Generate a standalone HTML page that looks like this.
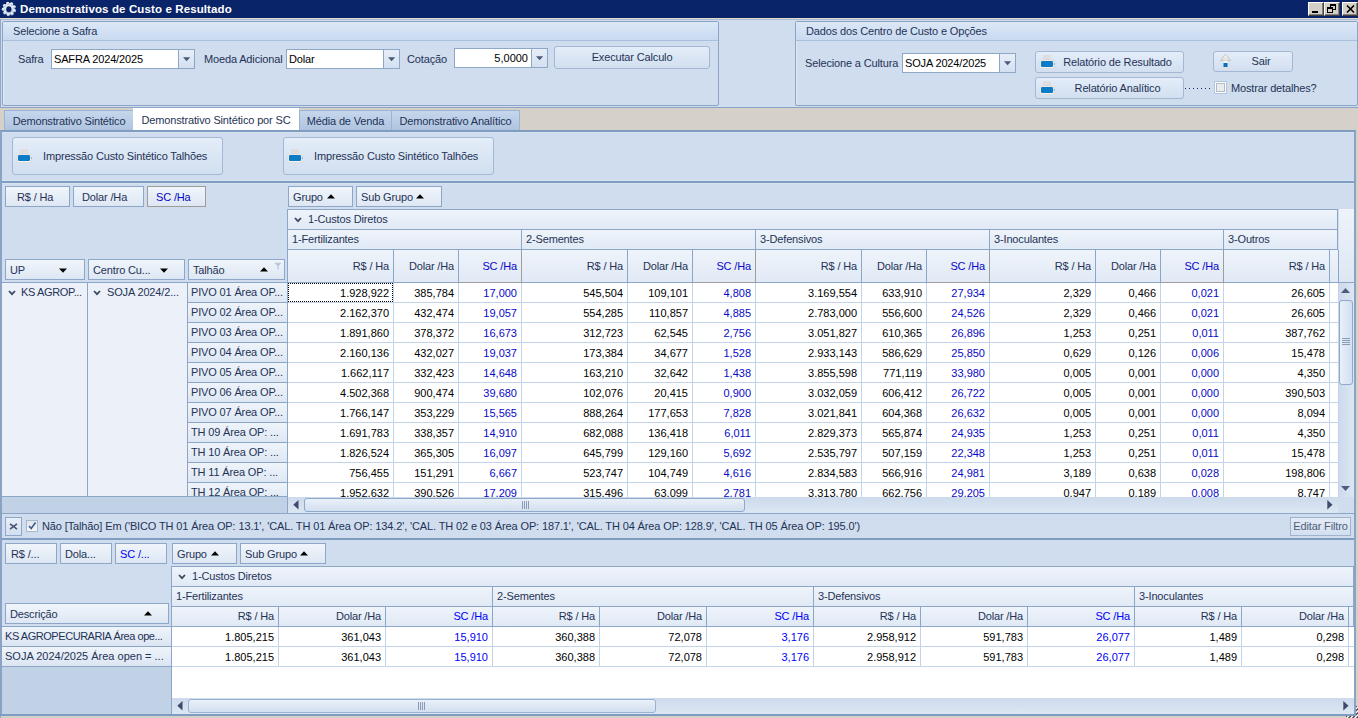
<!DOCTYPE html><html><head><meta charset="utf-8"><style>
html,body{margin:0;padding:0;}
body{width:1358px;height:718px;position:relative;overflow:hidden;background:#d5d1c9;font-family:"Liberation Sans",sans-serif;font-size:11px;color:#1f3356;}
.t{position:absolute;white-space:nowrap;letter-spacing:-0.15px;}
.n{position:absolute;white-space:nowrap;text-align:right;color:#000;}
</style></head><body>
<div style="position:absolute;left:0px;top:0px;width:1358px;height:18px;background:#0a246a;"></div>
<svg style="position:absolute;left:1px;top:1px" width="16" height="16" viewBox="0 0 16 16">
<defs><linearGradient id="gg" x1="0" y1="0" x2="0.3" y2="1"><stop offset="0" stop-color="#ffffff"/><stop offset="0.55" stop-color="#dfe6ef"/><stop offset="1" stop-color="#9fb8d8"/></linearGradient></defs>
<g fill="url(#gg)"><circle cx="8" cy="8" r="5.7"/><circle cx="13.35" cy="9.65" r="1.7"/><circle cx="11.03" cy="12.71" r="1.7"/><circle cx="7.30" cy="13.56" r="1.7"/><circle cx="3.89" cy="11.81" r="1.7"/><circle cx="2.41" cy="8.27" r="1.7"/><circle cx="3.54" cy="4.62" r="1.7"/><circle cx="6.76" cy="2.54" r="1.7"/><circle cx="10.56" cy="3.02" r="1.7"/><circle cx="13.16" cy="5.83" r="1.7"/></g><ellipse cx="7.8" cy="8.2" rx="2.6" ry="3" fill="#0a246a"/></svg>
<div class="t" style="left:20px;top:2px;font-weight:bold;font-size:11.5px;letter-spacing:0.12px;color:#fff;line-height:14px;">Demonstrativos de Custo e Resultado</div>
<div style="position:absolute;left:1308px;top:2px;width:16px;height:14px;box-sizing:border-box;background:#d4d0c8;border-top:1px solid #fff;border-left:1px solid #fff;border-right:1px solid #404040;border-bottom:1px solid #404040;box-shadow:inset -1px -1px 0 #808080;"><div style="position:absolute;left:3px;top:8px;width:6px;height:2px;background:#000"></div></div>
<div style="position:absolute;left:1324px;top:2px;width:16px;height:14px;box-sizing:border-box;background:#d4d0c8;border-top:1px solid #fff;border-left:1px solid #fff;border-right:1px solid #404040;border-bottom:1px solid #404040;box-shadow:inset -1px -1px 0 #808080;"><div style="position:absolute;left:5px;top:1px;width:5px;height:5px;border:1px solid #000;border-top-width:2px;box-sizing:border-box;width:6px;height:6px;"></div><div style="position:absolute;left:2px;top:4px;width:6px;height:6px;border:1px solid #000;border-top-width:2px;box-sizing:border-box;background:#d4d0c8"></div></div>
<div style="position:absolute;left:1342px;top:2px;width:16px;height:14px;box-sizing:border-box;background:#d4d0c8;border-top:1px solid #fff;border-left:1px solid #fff;border-right:1px solid #404040;border-bottom:1px solid #404040;box-shadow:inset -1px -1px 0 #808080;"><svg style="position:absolute;left:3px;top:2px" width="9" height="8" viewBox="0 0 9 8"><path d="M1 0.5 L8 7.5 M8 0.5 L1 7.5" stroke="#000" stroke-width="1.6"/></svg></div>
<div style="position:absolute;left:0px;top:18px;width:1358px;height:90px;background:#d0ddee;"></div>
<div style="position:absolute;left:0px;top:18px;width:1358px;height:1px;background:#e6dcc9;"></div>
<div style="position:absolute;left:0px;top:19px;width:1358px;height:1px;background:#a9bcd6;"></div>
<div style="position:absolute;left:0px;top:107px;width:1358px;height:1px;background:#8ba3c5;"></div>
<div style="position:absolute;left:0px;top:19px;width:1px;height:700px;background:#91a7c6;"></div>
<div style="position:absolute;left:2px;top:21px;width:717px;height:85px;box-sizing:border-box;border:1px solid #8ba3c5;border-radius:2px;background:#d0ddee;box-shadow:inset 1px 1px 0 #e2ebf7;"></div>
<div style="position:absolute;left:3px;top:22px;width:715px;height:19px;box-sizing:border-box;background:linear-gradient(#dbe7f7,#c9daf0);border-bottom:1px solid #a9bfdc;"></div>
<div class="t" style="left:13px;top:25px;line-height:13px;">Selecione a Safra</div>
<div style="position:absolute;left:795px;top:21px;width:563px;height:85px;box-sizing:border-box;border:1px solid #8ba3c5;border-radius:2px;background:#d0ddee;box-shadow:inset 1px 1px 0 #e2ebf7;"></div>
<div style="position:absolute;left:796px;top:22px;width:561px;height:19px;box-sizing:border-box;background:linear-gradient(#dbe7f7,#c9daf0);border-bottom:1px solid #a9bfdc;"></div>
<div class="t" style="left:806px;top:25px;line-height:13px;">Dados dos Centro de Custo e Opções</div>
<div class="t" style="left:18px;top:52px;line-height:14px;">Safra</div>
<div style="position:absolute;left:51px;top:49px;width:144px;height:20px;box-sizing:border-box;border:1px solid #8fa7c7;background:#fff;"></div>
<div class="t" style="left:54px;top:49px;height:20px;line-height:20px;color:#000;">SAFRA 2024/2025</div>
<div style="position:absolute;left:178px;top:49px;width:17px;height:20px;box-sizing:border-box;border:1px solid #8fa7c7;background:linear-gradient(#e7eef8,#d3e0f1);"></div>
<svg style="position:absolute;left:183px;top:57px" width="8" height="5" viewBox="0 0 8 5"><path d="M0 0.3 L7.2 0.3 L3.6 4.3 Z" fill="#4a5a7a"/></svg>
<div class="t" style="left:204px;top:52px;line-height:14px;">Moeda Adicional</div>
<div style="position:absolute;left:286px;top:49px;width:114px;height:20px;box-sizing:border-box;border:1px solid #8fa7c7;background:#fff;"></div>
<div class="t" style="left:289px;top:49px;height:20px;line-height:20px;color:#000;">Dolar</div>
<div style="position:absolute;left:383px;top:49px;width:17px;height:20px;box-sizing:border-box;border:1px solid #8fa7c7;background:linear-gradient(#e7eef8,#d3e0f1);"></div>
<svg style="position:absolute;left:388px;top:57px" width="8" height="5" viewBox="0 0 8 5"><path d="M0 0.3 L7.2 0.3 L3.6 4.3 Z" fill="#4a5a7a"/></svg>
<div class="t" style="left:407px;top:52px;line-height:14px;">Cotação</div>
<div style="position:absolute;left:454px;top:48px;width:94px;height:20px;box-sizing:border-box;border:1px solid #8fa7c7;background:#fff;"></div>
<div class="n" style="left:454px;width:74px;top:48px;height:20px;line-height:20px;">5,0000</div>
<div style="position:absolute;left:531px;top:48px;width:17px;height:20px;box-sizing:border-box;border:1px solid #8fa7c7;background:linear-gradient(#e7eef8,#d3e0f1);"></div>
<svg style="position:absolute;left:536px;top:56px" width="8" height="5" viewBox="0 0 8 5"><path d="M0 0.3 L7.2 0.3 L3.6 4.3 Z" fill="#4a5a7a"/></svg>
<div style="position:absolute;left:554px;top:46px;width:156px;height:23px;box-sizing:border-box;border:1px solid #a4b8d4;border-radius:3px;background:linear-gradient(#e4edf9,#d2dff0);"></div>
<div class="t" style="left:554px;top:46px;width:156px;height:23px;line-height:23px;text-align:center;">Executar Calculo</div>
<div class="t" style="left:805px;top:56px;line-height:14px;">Selecione a Cultura</div>
<div style="position:absolute;left:902px;top:53px;width:114px;height:20px;box-sizing:border-box;border:1px solid #8fa7c7;background:#fff;"></div>
<div class="t" style="left:905px;top:53px;height:20px;line-height:20px;color:#000;">SOJA 2024/2025</div>
<div style="position:absolute;left:999px;top:53px;width:17px;height:20px;box-sizing:border-box;border:1px solid #8fa7c7;background:linear-gradient(#e7eef8,#d3e0f1);"></div>
<svg style="position:absolute;left:1004px;top:61px" width="8" height="5" viewBox="0 0 8 5"><path d="M0 0.3 L7.2 0.3 L3.6 4.3 Z" fill="#4a5a7a"/></svg>
<div style="position:absolute;left:1035px;top:51px;width:149px;height:22px;box-sizing:border-box;border:1px solid #a4b8d4;border-radius:3px;background:linear-gradient(#e4edf9,#d2dff0);"></div>
<div class="t" style="left:1043px;top:51px;width:149px;height:22px;line-height:22px;text-align:center;">Relatório de Resultado</div>
<svg style="position:absolute;left:1039px;top:54px" width="16" height="15" viewBox="0 0 16 15">
<rect x="4" y="1" width="8" height="5.5" fill="#dedede"/>
<rect x="1" y="6" width="14" height="8.6" rx="1" fill="#f9f3ec" stroke="#d6d6d6" stroke-width="0.8"/>
<rect x="2" y="7" width="12" height="6" rx="1.2" fill="#0a7cc8"/>
<rect x="14.8" y="9.5" width="1" height="1" fill="#3a8fd0"/></svg>
<div style="position:absolute;left:1213px;top:51px;width:80px;height:21px;box-sizing:border-box;border:1px solid #a4b8d4;border-radius:3px;background:linear-gradient(#e4edf9,#d2dff0);"></div>
<div class="t" style="left:1221px;top:51px;width:80px;height:21px;line-height:21px;text-align:center;">Sair</div>
<svg style="position:absolute;left:1220px;top:53px" width="12" height="17" viewBox="0 0 12 17">
<defs><linearGradient id="ag" x1="0" y1="0" x2="0" y2="1"><stop offset="0" stop-color="#fafafa"/><stop offset="1" stop-color="#dcdcdc"/></linearGradient></defs><path d="M5.5 1 L10.8 7.5 L0.6 7.5 Z" fill="url(#ag)" stroke="#bdbdbd" stroke-width="0.8"/>
<rect x="3.5" y="7.5" width="4" height="2.5" fill="#f6f2ee"/>
<rect x="3.5" y="10" width="4" height="4" fill="#0a6fc0"/>
<rect x="3.5" y="14" width="4" height="2.7" fill="#e4e0dc"/></svg>
<div style="position:absolute;left:1035px;top:77px;width:149px;height:22px;box-sizing:border-box;border:1px solid #a4b8d4;border-radius:3px;background:linear-gradient(#e4edf9,#d2dff0);"></div>
<div class="t" style="left:1043px;top:77px;width:149px;height:22px;line-height:22px;text-align:center;">Relatório Analítico</div>
<svg style="position:absolute;left:1039px;top:80px" width="16" height="15" viewBox="0 0 16 15">
<rect x="4" y="1" width="8" height="5.5" fill="#dedede"/>
<rect x="1" y="6" width="14" height="8.6" rx="1" fill="#f9f3ec" stroke="#d6d6d6" stroke-width="0.8"/>
<rect x="2" y="7" width="12" height="6" rx="1.2" fill="#0a7cc8"/>
<rect x="14.8" y="9.5" width="1" height="1" fill="#3a8fd0"/></svg>
<div style="position:absolute;left:1185px;top:88px;width:26px;height:1px;background:repeating-linear-gradient(90deg,#1d2a6a 0 1px,transparent 1px 4px);"></div>
<div style="position:absolute;left:1214px;top:81px;width:13px;height:13px;box-sizing:border-box;border:1px solid #b2c5df;background:#fbfcfd;"></div>
<div style="position:absolute;left:1216px;top:83px;width:9px;height:9px;box-sizing:border-box;border:1px solid #b5bcc6;background:#e9ebef;"></div>
<div class="t" style="left:1231px;top:81px;line-height:14px;">Mostrar detalhes?</div>
<div style="position:absolute;left:0px;top:108px;width:1358px;height:23px;background:#d5d1c9;"></div>
<div style="position:absolute;left:4px;top:110px;width:130px;height:21px;box-sizing:border-box;border:1px solid #9db3d3;border-bottom:none;background:linear-gradient(#c6d7ed,#aec3df);"></div>
<div class="t" style="left:4px;top:111px;width:130px;height:20px;line-height:20px;text-align:center;">Demonstrativo Sintético</div>
<div style="position:absolute;left:133px;top:108px;width:166px;height:23px;background:#fff;"></div>
<div class="t" style="left:133px;top:110px;width:166px;height:21px;line-height:21px;text-align:center;">Demonstrativo Sintético por SC</div>
<div style="position:absolute;left:299px;top:110px;width:93px;height:21px;box-sizing:border-box;border:1px solid #9db3d3;border-bottom:none;background:linear-gradient(#c6d7ed,#aec3df);"></div>
<div class="t" style="left:299px;top:111px;width:93px;height:20px;line-height:20px;text-align:center;">Média de Venda</div>
<div style="position:absolute;left:391px;top:110px;width:129px;height:21px;box-sizing:border-box;border:1px solid #9db3d3;border-bottom:none;background:linear-gradient(#c6d7ed,#aec3df);"></div>
<div class="t" style="left:391px;top:111px;width:129px;height:20px;line-height:20px;text-align:center;">Demonstrativo Analítico</div>
<div style="position:absolute;left:0px;top:131px;width:1356px;height:585px;background:#d0ddee;"></div>
<div style="position:absolute;left:0px;top:130px;width:1356px;height:2px;background:#7f9cc1;"></div>
<div style="position:absolute;left:2px;top:132px;width:1352px;height:1px;background:#d7e2f0;"></div>
<div style="position:absolute;left:0px;top:131px;width:2px;height:585px;background:#8aa3c4;"></div>
<div style="position:absolute;left:1354px;top:131px;width:2px;height:585px;background:#8aa3c4;"></div>
<div style="position:absolute;left:0px;top:714px;width:1356px;height:2px;background:#7f9cc1;"></div>
<div style="position:absolute;left:12px;top:137px;width:211px;height:38px;box-sizing:border-box;border:1px solid #a4b8d4;border-radius:3px;background:linear-gradient(#e4edf9,#d2dff0);"></div>
<div class="t" style="left:43px;top:137px;height:38px;line-height:38px;">Impressão Custo Sintético Talhões</div>
<svg style="position:absolute;left:16px;top:148px" width="16" height="15" viewBox="0 0 16 15">
<rect x="4" y="1" width="8" height="5.5" fill="#dedede"/>
<rect x="1" y="6" width="14" height="8.6" rx="1" fill="#f9f3ec" stroke="#d6d6d6" stroke-width="0.8"/>
<rect x="2" y="7" width="12" height="6" rx="1.2" fill="#0a7cc8"/>
<rect x="14.8" y="9.5" width="1" height="1" fill="#3a8fd0"/></svg>
<div style="position:absolute;left:283px;top:137px;width:211px;height:38px;box-sizing:border-box;border:1px solid #a4b8d4;border-radius:3px;background:linear-gradient(#e4edf9,#d2dff0);"></div>
<div class="t" style="left:314px;top:137px;height:38px;line-height:38px;">Impressão Custo Sintético Talhões</div>
<svg style="position:absolute;left:287px;top:148px" width="16" height="15" viewBox="0 0 16 15">
<rect x="4" y="1" width="8" height="5.5" fill="#dedede"/>
<rect x="1" y="6" width="14" height="8.6" rx="1" fill="#f9f3ec" stroke="#d6d6d6" stroke-width="0.8"/>
<rect x="2" y="7" width="12" height="6" rx="1.2" fill="#0a7cc8"/>
<rect x="14.8" y="9.5" width="1" height="1" fill="#3a8fd0"/></svg>
<div style="position:absolute;left:2px;top:181px;width:1352px;height:2px;background:#7f9cc1;"></div>
<div style="position:absolute;left:2px;top:180px;width:1352px;height:1px;background:#d8e3f0;"></div>
<div style="position:absolute;left:2px;top:183px;width:1352px;height:1px;background:#d8e3f0;"></div>
<div style="position:absolute;left:5px;top:186px;width:65px;height:21px;box-sizing:border-box;border:1px solid #8ea7c8;background:linear-gradient(#f0f5fb,#dde7f3);"></div>
<div class="t" style="left:17px;top:187px;height:21px;line-height:21px;">R$ / Ha</div>
<div style="position:absolute;left:73px;top:186px;width:71px;height:21px;box-sizing:border-box;border:1px solid #8ea7c8;background:linear-gradient(#f0f5fb,#dde7f3);"></div>
<div class="t" style="left:82px;top:187px;height:21px;line-height:21px;">Dolar /Ha</div>
<div style="position:absolute;left:147px;top:186px;width:59px;height:21px;box-sizing:border-box;border:1px solid #a09c98;background:linear-gradient(#f0f5fb,#dde7f3);"></div>
<div class="t" style="left:156px;top:187px;height:21px;line-height:21px;color:#0808c8;">SC /Ha</div>
<div style="position:absolute;left:288px;top:186px;width:65px;height:21px;box-sizing:border-box;border:1px solid #8ea7c8;background:linear-gradient(#f0f5fb,#dde7f3);"></div>
<div class="t" style="left:293px;top:187px;height:21px;line-height:21px;">Grupo</div>
<svg style="position:absolute;left:327px;top:194px" width="8" height="5" viewBox="0 0 8 5"><path d="M0 4.5 L8 4.5 L4 0.3 Z" fill="#000"/></svg>
<div style="position:absolute;left:356px;top:186px;width:86px;height:21px;box-sizing:border-box;border:1px solid #8ea7c8;background:linear-gradient(#f0f5fb,#dde7f3);"></div>
<div class="t" style="left:361px;top:187px;height:21px;line-height:21px;">Sub Grupo</div>
<svg style="position:absolute;left:416px;top:194px" width="8" height="5" viewBox="0 0 8 5"><path d="M0 4.5 L8 4.5 L4 0.3 Z" fill="#000"/></svg>
<div style="position:absolute;left:5px;top:259px;width:80px;height:21px;box-sizing:border-box;border:1px solid #8ea7c8;background:linear-gradient(#f0f5fb,#dde7f3);"></div>
<div class="t" style="left:10px;top:260px;height:21px;line-height:21px;">UP</div>
<svg style="position:absolute;left:59px;top:268px" width="8" height="5" viewBox="0 0 8 5"><path d="M0 0.5 L8 0.5 L4 4.7 Z" fill="#000"/></svg>
<div style="position:absolute;left:88px;top:259px;width:97px;height:21px;box-sizing:border-box;border:1px solid #8ea7c8;background:linear-gradient(#f0f5fb,#dde7f3);"></div>
<div class="t" style="left:93px;top:260px;height:21px;line-height:21px;">Centro Cu...</div>
<svg style="position:absolute;left:160px;top:268px" width="8" height="5" viewBox="0 0 8 5"><path d="M0 0.5 L8 0.5 L4 4.7 Z" fill="#000"/></svg>
<div style="position:absolute;left:188px;top:259px;width:97px;height:21px;box-sizing:border-box;border:1px solid #8ea7c8;background:linear-gradient(#f0f5fb,#dde7f3);"></div>
<div class="t" style="left:193px;top:260px;height:21px;line-height:21px;">Talhão</div>
<svg style="position:absolute;left:260px;top:267px" width="8" height="5" viewBox="0 0 8 5"><path d="M0 4.5 L8 4.5 L4 0.3 Z" fill="#000"/></svg>
<svg style="position:absolute;left:274px;top:262px" width="8" height="8" viewBox="0 0 8 8"><path d="M0.5 0.8 L7.5 0.8 L4.6 4 L4.6 7.5 L3.4 7.5 L3.4 4 Z" fill="#b7c6d8"/></svg>
<div style="position:absolute;left:287px;top:209px;width:1051px;height:1px;background:#8ca6c8;"></div>
<div style="position:absolute;left:287px;top:209px;width:1px;height:288px;background:#8ca6c8;"></div>
<div style="position:absolute;left:288px;top:210px;width:1050px;height:20px;box-sizing:border-box;border-right:1px solid #8ca6c8;border-bottom:1px solid #8ca6c8;background:linear-gradient(#eff4fb,#e0e9f5);"></div>
<div class="t" style="left:308px;top:209px;height:20px;line-height:20px;">1-Custos Diretos</div>
<svg style="position:absolute;left:294px;top:217px" width="8" height="6" viewBox="0 0 8 6"><path d="M1 1 L4 4.2 L7 1" fill="none" stroke="#3b4a63" stroke-width="1.8"/></svg>
<div style="position:absolute;left:288px;top:230px;width:234px;height:20px;box-sizing:border-box;border-right:1px solid #8ca6c8;border-bottom:1px solid #8ca6c8;background:linear-gradient(#eff4fb,#e0e9f5);"></div>
<div class="t" style="left:292px;top:229px;height:20px;line-height:20px;">1-Fertilizantes</div>
<div style="position:absolute;left:522px;top:230px;width:234px;height:20px;box-sizing:border-box;border-right:1px solid #8ca6c8;border-bottom:1px solid #8ca6c8;background:linear-gradient(#eff4fb,#e0e9f5);"></div>
<div class="t" style="left:526px;top:229px;height:20px;line-height:20px;">2-Sementes</div>
<div style="position:absolute;left:756px;top:230px;width:234px;height:20px;box-sizing:border-box;border-right:1px solid #8ca6c8;border-bottom:1px solid #8ca6c8;background:linear-gradient(#eff4fb,#e0e9f5);"></div>
<div class="t" style="left:760px;top:229px;height:20px;line-height:20px;">3-Defensivos</div>
<div style="position:absolute;left:990px;top:230px;width:234px;height:20px;box-sizing:border-box;border-right:1px solid #8ca6c8;border-bottom:1px solid #8ca6c8;background:linear-gradient(#eff4fb,#e0e9f5);"></div>
<div class="t" style="left:994px;top:229px;height:20px;line-height:20px;">3-Inoculantes</div>
<div style="position:absolute;left:1224px;top:230px;width:114px;height:20px;box-sizing:border-box;border-right:1px solid #8ca6c8;border-bottom:1px solid #8ca6c8;background:linear-gradient(#eff4fb,#e0e9f5);"></div>
<div class="t" style="left:1228px;top:229px;height:20px;line-height:20px;">3-Outros</div>
<div style="position:absolute;left:288px;top:250px;width:106px;height:33px;box-sizing:border-box;border-right:1px solid #8ca6c8;border-bottom:1px solid #8ca6c8;background:linear-gradient(#eff4fb,#e0e9f5);"></div>
<div class="t" style="left:288px;width:101px;top:250px;height:33px;line-height:33px;text-align:right;">R$ / Ha</div>
<div style="position:absolute;left:394px;top:250px;width:65px;height:33px;box-sizing:border-box;border-right:1px solid #8ca6c8;border-bottom:1px solid #8ca6c8;background:linear-gradient(#eff4fb,#e0e9f5);"></div>
<div class="t" style="left:394px;width:60px;top:250px;height:33px;line-height:33px;text-align:right;">Dolar /Ha</div>
<div style="position:absolute;left:459px;top:250px;width:63px;height:33px;box-sizing:border-box;border-right:1px solid #a09e9a;border-bottom:1px solid #a09e9a;background:linear-gradient(#eff4fb,#e0e9f5);"></div>
<div class="t" style="left:459px;width:58px;top:250px;height:33px;line-height:33px;text-align:right;color:#0808c8;">SC /Ha</div>
<div style="position:absolute;left:522px;top:250px;width:106px;height:33px;box-sizing:border-box;border-right:1px solid #8ca6c8;border-bottom:1px solid #8ca6c8;background:linear-gradient(#eff4fb,#e0e9f5);"></div>
<div class="t" style="left:522px;width:101px;top:250px;height:33px;line-height:33px;text-align:right;">R$ / Ha</div>
<div style="position:absolute;left:628px;top:250px;width:65px;height:33px;box-sizing:border-box;border-right:1px solid #8ca6c8;border-bottom:1px solid #8ca6c8;background:linear-gradient(#eff4fb,#e0e9f5);"></div>
<div class="t" style="left:628px;width:60px;top:250px;height:33px;line-height:33px;text-align:right;">Dolar /Ha</div>
<div style="position:absolute;left:693px;top:250px;width:63px;height:33px;box-sizing:border-box;border-right:1px solid #a09e9a;border-bottom:1px solid #a09e9a;background:linear-gradient(#eff4fb,#e0e9f5);"></div>
<div class="t" style="left:693px;width:58px;top:250px;height:33px;line-height:33px;text-align:right;color:#0808c8;">SC /Ha</div>
<div style="position:absolute;left:756px;top:250px;width:106px;height:33px;box-sizing:border-box;border-right:1px solid #8ca6c8;border-bottom:1px solid #8ca6c8;background:linear-gradient(#eff4fb,#e0e9f5);"></div>
<div class="t" style="left:756px;width:101px;top:250px;height:33px;line-height:33px;text-align:right;">R$ / Ha</div>
<div style="position:absolute;left:862px;top:250px;width:65px;height:33px;box-sizing:border-box;border-right:1px solid #8ca6c8;border-bottom:1px solid #8ca6c8;background:linear-gradient(#eff4fb,#e0e9f5);"></div>
<div class="t" style="left:862px;width:60px;top:250px;height:33px;line-height:33px;text-align:right;">Dolar /Ha</div>
<div style="position:absolute;left:927px;top:250px;width:63px;height:33px;box-sizing:border-box;border-right:1px solid #a09e9a;border-bottom:1px solid #a09e9a;background:linear-gradient(#eff4fb,#e0e9f5);"></div>
<div class="t" style="left:927px;width:58px;top:250px;height:33px;line-height:33px;text-align:right;color:#0808c8;">SC /Ha</div>
<div style="position:absolute;left:990px;top:250px;width:106px;height:33px;box-sizing:border-box;border-right:1px solid #8ca6c8;border-bottom:1px solid #8ca6c8;background:linear-gradient(#eff4fb,#e0e9f5);"></div>
<div class="t" style="left:990px;width:101px;top:250px;height:33px;line-height:33px;text-align:right;">R$ / Ha</div>
<div style="position:absolute;left:1096px;top:250px;width:65px;height:33px;box-sizing:border-box;border-right:1px solid #8ca6c8;border-bottom:1px solid #8ca6c8;background:linear-gradient(#eff4fb,#e0e9f5);"></div>
<div class="t" style="left:1096px;width:60px;top:250px;height:33px;line-height:33px;text-align:right;">Dolar /Ha</div>
<div style="position:absolute;left:1161px;top:250px;width:63px;height:33px;box-sizing:border-box;border-right:1px solid #a09e9a;border-bottom:1px solid #a09e9a;background:linear-gradient(#eff4fb,#e0e9f5);"></div>
<div class="t" style="left:1161px;width:58px;top:250px;height:33px;line-height:33px;text-align:right;color:#0808c8;">SC /Ha</div>
<div style="position:absolute;left:1224px;top:250px;width:106px;height:33px;box-sizing:border-box;border-right:1px solid #8ca6c8;border-bottom:1px solid #8ca6c8;background:linear-gradient(#eff4fb,#e0e9f5);"></div>
<div class="t" style="left:1224px;width:101px;top:250px;height:33px;line-height:33px;text-align:right;">R$ / Ha</div>
<div style="position:absolute;left:1330px;top:250px;width:9px;height:33px;box-sizing:border-box;border-right:1px solid #8ca6c8;border-bottom:1px solid #8ca6c8;background:linear-gradient(#eff4fb,#e0e9f5);"></div>
<div style="position:absolute;left:1339px;top:209px;width:15px;height:73px;background:linear-gradient(#eef3fa,#dde7f3);"></div>
<div style="position:absolute;left:1339px;top:282px;width:15px;height:1px;background:#8ca6c8;"></div>
<div style="position:absolute;left:288px;top:283px;width:1050px;height:214px;background:#fff;"></div>
<div class="n" style="left:288px;top:284px;width:101px;height:19px;line-height:19px;color:#000;">1.928,922</div>
<div class="n" style="left:394px;top:284px;width:60px;height:19px;line-height:19px;color:#000;">385,784</div>
<div class="n" style="left:459px;top:284px;width:58px;height:19px;line-height:19px;color:#0808c8;">17,000</div>
<div class="n" style="left:522px;top:284px;width:101px;height:19px;line-height:19px;color:#000;">545,504</div>
<div class="n" style="left:628px;top:284px;width:60px;height:19px;line-height:19px;color:#000;">109,101</div>
<div class="n" style="left:693px;top:284px;width:58px;height:19px;line-height:19px;color:#0808c8;">4,808</div>
<div class="n" style="left:756px;top:284px;width:101px;height:19px;line-height:19px;color:#000;">3.169,554</div>
<div class="n" style="left:862px;top:284px;width:60px;height:19px;line-height:19px;color:#000;">633,910</div>
<div class="n" style="left:927px;top:284px;width:58px;height:19px;line-height:19px;color:#0808c8;">27,934</div>
<div class="n" style="left:990px;top:284px;width:101px;height:19px;line-height:19px;color:#000;">2,329</div>
<div class="n" style="left:1096px;top:284px;width:60px;height:19px;line-height:19px;color:#000;">0,466</div>
<div class="n" style="left:1161px;top:284px;width:58px;height:19px;line-height:19px;color:#0808c8;">0,021</div>
<div class="n" style="left:1224px;top:284px;width:101px;height:19px;line-height:19px;color:#000;">26,605</div>
<div style="position:absolute;left:288px;top:302px;width:1050px;height:1px;background:#c3d3ea;"></div>
<div class="n" style="left:288px;top:304px;width:101px;height:19px;line-height:19px;color:#000;">2.162,370</div>
<div class="n" style="left:394px;top:304px;width:60px;height:19px;line-height:19px;color:#000;">432,474</div>
<div class="n" style="left:459px;top:304px;width:58px;height:19px;line-height:19px;color:#0808c8;">19,057</div>
<div class="n" style="left:522px;top:304px;width:101px;height:19px;line-height:19px;color:#000;">554,285</div>
<div class="n" style="left:628px;top:304px;width:60px;height:19px;line-height:19px;color:#000;">110,857</div>
<div class="n" style="left:693px;top:304px;width:58px;height:19px;line-height:19px;color:#0808c8;">4,885</div>
<div class="n" style="left:756px;top:304px;width:101px;height:19px;line-height:19px;color:#000;">2.783,000</div>
<div class="n" style="left:862px;top:304px;width:60px;height:19px;line-height:19px;color:#000;">556,600</div>
<div class="n" style="left:927px;top:304px;width:58px;height:19px;line-height:19px;color:#0808c8;">24,526</div>
<div class="n" style="left:990px;top:304px;width:101px;height:19px;line-height:19px;color:#000;">2,329</div>
<div class="n" style="left:1096px;top:304px;width:60px;height:19px;line-height:19px;color:#000;">0,466</div>
<div class="n" style="left:1161px;top:304px;width:58px;height:19px;line-height:19px;color:#0808c8;">0,021</div>
<div class="n" style="left:1224px;top:304px;width:101px;height:19px;line-height:19px;color:#000;">26,605</div>
<div style="position:absolute;left:288px;top:322px;width:1050px;height:1px;background:#c3d3ea;"></div>
<div class="n" style="left:288px;top:324px;width:101px;height:19px;line-height:19px;color:#000;">1.891,860</div>
<div class="n" style="left:394px;top:324px;width:60px;height:19px;line-height:19px;color:#000;">378,372</div>
<div class="n" style="left:459px;top:324px;width:58px;height:19px;line-height:19px;color:#0808c8;">16,673</div>
<div class="n" style="left:522px;top:324px;width:101px;height:19px;line-height:19px;color:#000;">312,723</div>
<div class="n" style="left:628px;top:324px;width:60px;height:19px;line-height:19px;color:#000;">62,545</div>
<div class="n" style="left:693px;top:324px;width:58px;height:19px;line-height:19px;color:#0808c8;">2,756</div>
<div class="n" style="left:756px;top:324px;width:101px;height:19px;line-height:19px;color:#000;">3.051,827</div>
<div class="n" style="left:862px;top:324px;width:60px;height:19px;line-height:19px;color:#000;">610,365</div>
<div class="n" style="left:927px;top:324px;width:58px;height:19px;line-height:19px;color:#0808c8;">26,896</div>
<div class="n" style="left:990px;top:324px;width:101px;height:19px;line-height:19px;color:#000;">1,253</div>
<div class="n" style="left:1096px;top:324px;width:60px;height:19px;line-height:19px;color:#000;">0,251</div>
<div class="n" style="left:1161px;top:324px;width:58px;height:19px;line-height:19px;color:#0808c8;">0,011</div>
<div class="n" style="left:1224px;top:324px;width:101px;height:19px;line-height:19px;color:#000;">387,762</div>
<div style="position:absolute;left:288px;top:342px;width:1050px;height:1px;background:#c3d3ea;"></div>
<div class="n" style="left:288px;top:344px;width:101px;height:19px;line-height:19px;color:#000;">2.160,136</div>
<div class="n" style="left:394px;top:344px;width:60px;height:19px;line-height:19px;color:#000;">432,027</div>
<div class="n" style="left:459px;top:344px;width:58px;height:19px;line-height:19px;color:#0808c8;">19,037</div>
<div class="n" style="left:522px;top:344px;width:101px;height:19px;line-height:19px;color:#000;">173,384</div>
<div class="n" style="left:628px;top:344px;width:60px;height:19px;line-height:19px;color:#000;">34,677</div>
<div class="n" style="left:693px;top:344px;width:58px;height:19px;line-height:19px;color:#0808c8;">1,528</div>
<div class="n" style="left:756px;top:344px;width:101px;height:19px;line-height:19px;color:#000;">2.933,143</div>
<div class="n" style="left:862px;top:344px;width:60px;height:19px;line-height:19px;color:#000;">586,629</div>
<div class="n" style="left:927px;top:344px;width:58px;height:19px;line-height:19px;color:#0808c8;">25,850</div>
<div class="n" style="left:990px;top:344px;width:101px;height:19px;line-height:19px;color:#000;">0,629</div>
<div class="n" style="left:1096px;top:344px;width:60px;height:19px;line-height:19px;color:#000;">0,126</div>
<div class="n" style="left:1161px;top:344px;width:58px;height:19px;line-height:19px;color:#0808c8;">0,006</div>
<div class="n" style="left:1224px;top:344px;width:101px;height:19px;line-height:19px;color:#000;">15,478</div>
<div style="position:absolute;left:288px;top:362px;width:1050px;height:1px;background:#c3d3ea;"></div>
<div class="n" style="left:288px;top:364px;width:101px;height:19px;line-height:19px;color:#000;">1.662,117</div>
<div class="n" style="left:394px;top:364px;width:60px;height:19px;line-height:19px;color:#000;">332,423</div>
<div class="n" style="left:459px;top:364px;width:58px;height:19px;line-height:19px;color:#0808c8;">14,648</div>
<div class="n" style="left:522px;top:364px;width:101px;height:19px;line-height:19px;color:#000;">163,210</div>
<div class="n" style="left:628px;top:364px;width:60px;height:19px;line-height:19px;color:#000;">32,642</div>
<div class="n" style="left:693px;top:364px;width:58px;height:19px;line-height:19px;color:#0808c8;">1,438</div>
<div class="n" style="left:756px;top:364px;width:101px;height:19px;line-height:19px;color:#000;">3.855,598</div>
<div class="n" style="left:862px;top:364px;width:60px;height:19px;line-height:19px;color:#000;">771,119</div>
<div class="n" style="left:927px;top:364px;width:58px;height:19px;line-height:19px;color:#0808c8;">33,980</div>
<div class="n" style="left:990px;top:364px;width:101px;height:19px;line-height:19px;color:#000;">0,005</div>
<div class="n" style="left:1096px;top:364px;width:60px;height:19px;line-height:19px;color:#000;">0,001</div>
<div class="n" style="left:1161px;top:364px;width:58px;height:19px;line-height:19px;color:#0808c8;">0,000</div>
<div class="n" style="left:1224px;top:364px;width:101px;height:19px;line-height:19px;color:#000;">4,350</div>
<div style="position:absolute;left:288px;top:382px;width:1050px;height:1px;background:#c3d3ea;"></div>
<div class="n" style="left:288px;top:384px;width:101px;height:19px;line-height:19px;color:#000;">4.502,368</div>
<div class="n" style="left:394px;top:384px;width:60px;height:19px;line-height:19px;color:#000;">900,474</div>
<div class="n" style="left:459px;top:384px;width:58px;height:19px;line-height:19px;color:#0808c8;">39,680</div>
<div class="n" style="left:522px;top:384px;width:101px;height:19px;line-height:19px;color:#000;">102,076</div>
<div class="n" style="left:628px;top:384px;width:60px;height:19px;line-height:19px;color:#000;">20,415</div>
<div class="n" style="left:693px;top:384px;width:58px;height:19px;line-height:19px;color:#0808c8;">0,900</div>
<div class="n" style="left:756px;top:384px;width:101px;height:19px;line-height:19px;color:#000;">3.032,059</div>
<div class="n" style="left:862px;top:384px;width:60px;height:19px;line-height:19px;color:#000;">606,412</div>
<div class="n" style="left:927px;top:384px;width:58px;height:19px;line-height:19px;color:#0808c8;">26,722</div>
<div class="n" style="left:990px;top:384px;width:101px;height:19px;line-height:19px;color:#000;">0,005</div>
<div class="n" style="left:1096px;top:384px;width:60px;height:19px;line-height:19px;color:#000;">0,001</div>
<div class="n" style="left:1161px;top:384px;width:58px;height:19px;line-height:19px;color:#0808c8;">0,000</div>
<div class="n" style="left:1224px;top:384px;width:101px;height:19px;line-height:19px;color:#000;">390,503</div>
<div style="position:absolute;left:288px;top:402px;width:1050px;height:1px;background:#c3d3ea;"></div>
<div class="n" style="left:288px;top:404px;width:101px;height:19px;line-height:19px;color:#000;">1.766,147</div>
<div class="n" style="left:394px;top:404px;width:60px;height:19px;line-height:19px;color:#000;">353,229</div>
<div class="n" style="left:459px;top:404px;width:58px;height:19px;line-height:19px;color:#0808c8;">15,565</div>
<div class="n" style="left:522px;top:404px;width:101px;height:19px;line-height:19px;color:#000;">888,264</div>
<div class="n" style="left:628px;top:404px;width:60px;height:19px;line-height:19px;color:#000;">177,653</div>
<div class="n" style="left:693px;top:404px;width:58px;height:19px;line-height:19px;color:#0808c8;">7,828</div>
<div class="n" style="left:756px;top:404px;width:101px;height:19px;line-height:19px;color:#000;">3.021,841</div>
<div class="n" style="left:862px;top:404px;width:60px;height:19px;line-height:19px;color:#000;">604,368</div>
<div class="n" style="left:927px;top:404px;width:58px;height:19px;line-height:19px;color:#0808c8;">26,632</div>
<div class="n" style="left:990px;top:404px;width:101px;height:19px;line-height:19px;color:#000;">0,005</div>
<div class="n" style="left:1096px;top:404px;width:60px;height:19px;line-height:19px;color:#000;">0,001</div>
<div class="n" style="left:1161px;top:404px;width:58px;height:19px;line-height:19px;color:#0808c8;">0,000</div>
<div class="n" style="left:1224px;top:404px;width:101px;height:19px;line-height:19px;color:#000;">8,094</div>
<div style="position:absolute;left:288px;top:422px;width:1050px;height:1px;background:#c3d3ea;"></div>
<div class="n" style="left:288px;top:424px;width:101px;height:19px;line-height:19px;color:#000;">1.691,783</div>
<div class="n" style="left:394px;top:424px;width:60px;height:19px;line-height:19px;color:#000;">338,357</div>
<div class="n" style="left:459px;top:424px;width:58px;height:19px;line-height:19px;color:#0808c8;">14,910</div>
<div class="n" style="left:522px;top:424px;width:101px;height:19px;line-height:19px;color:#000;">682,088</div>
<div class="n" style="left:628px;top:424px;width:60px;height:19px;line-height:19px;color:#000;">136,418</div>
<div class="n" style="left:693px;top:424px;width:58px;height:19px;line-height:19px;color:#0808c8;">6,011</div>
<div class="n" style="left:756px;top:424px;width:101px;height:19px;line-height:19px;color:#000;">2.829,373</div>
<div class="n" style="left:862px;top:424px;width:60px;height:19px;line-height:19px;color:#000;">565,874</div>
<div class="n" style="left:927px;top:424px;width:58px;height:19px;line-height:19px;color:#0808c8;">24,935</div>
<div class="n" style="left:990px;top:424px;width:101px;height:19px;line-height:19px;color:#000;">1,253</div>
<div class="n" style="left:1096px;top:424px;width:60px;height:19px;line-height:19px;color:#000;">0,251</div>
<div class="n" style="left:1161px;top:424px;width:58px;height:19px;line-height:19px;color:#0808c8;">0,011</div>
<div class="n" style="left:1224px;top:424px;width:101px;height:19px;line-height:19px;color:#000;">4,350</div>
<div style="position:absolute;left:288px;top:442px;width:1050px;height:1px;background:#c3d3ea;"></div>
<div class="n" style="left:288px;top:444px;width:101px;height:19px;line-height:19px;color:#000;">1.826,524</div>
<div class="n" style="left:394px;top:444px;width:60px;height:19px;line-height:19px;color:#000;">365,305</div>
<div class="n" style="left:459px;top:444px;width:58px;height:19px;line-height:19px;color:#0808c8;">16,097</div>
<div class="n" style="left:522px;top:444px;width:101px;height:19px;line-height:19px;color:#000;">645,799</div>
<div class="n" style="left:628px;top:444px;width:60px;height:19px;line-height:19px;color:#000;">129,160</div>
<div class="n" style="left:693px;top:444px;width:58px;height:19px;line-height:19px;color:#0808c8;">5,692</div>
<div class="n" style="left:756px;top:444px;width:101px;height:19px;line-height:19px;color:#000;">2.535,797</div>
<div class="n" style="left:862px;top:444px;width:60px;height:19px;line-height:19px;color:#000;">507,159</div>
<div class="n" style="left:927px;top:444px;width:58px;height:19px;line-height:19px;color:#0808c8;">22,348</div>
<div class="n" style="left:990px;top:444px;width:101px;height:19px;line-height:19px;color:#000;">1,253</div>
<div class="n" style="left:1096px;top:444px;width:60px;height:19px;line-height:19px;color:#000;">0,251</div>
<div class="n" style="left:1161px;top:444px;width:58px;height:19px;line-height:19px;color:#0808c8;">0,011</div>
<div class="n" style="left:1224px;top:444px;width:101px;height:19px;line-height:19px;color:#000;">15,478</div>
<div style="position:absolute;left:288px;top:462px;width:1050px;height:1px;background:#c3d3ea;"></div>
<div class="n" style="left:288px;top:464px;width:101px;height:19px;line-height:19px;color:#000;">756,455</div>
<div class="n" style="left:394px;top:464px;width:60px;height:19px;line-height:19px;color:#000;">151,291</div>
<div class="n" style="left:459px;top:464px;width:58px;height:19px;line-height:19px;color:#0808c8;">6,667</div>
<div class="n" style="left:522px;top:464px;width:101px;height:19px;line-height:19px;color:#000;">523,747</div>
<div class="n" style="left:628px;top:464px;width:60px;height:19px;line-height:19px;color:#000;">104,749</div>
<div class="n" style="left:693px;top:464px;width:58px;height:19px;line-height:19px;color:#0808c8;">4,616</div>
<div class="n" style="left:756px;top:464px;width:101px;height:19px;line-height:19px;color:#000;">2.834,583</div>
<div class="n" style="left:862px;top:464px;width:60px;height:19px;line-height:19px;color:#000;">566,916</div>
<div class="n" style="left:927px;top:464px;width:58px;height:19px;line-height:19px;color:#0808c8;">24,981</div>
<div class="n" style="left:990px;top:464px;width:101px;height:19px;line-height:19px;color:#000;">3,189</div>
<div class="n" style="left:1096px;top:464px;width:60px;height:19px;line-height:19px;color:#000;">0,638</div>
<div class="n" style="left:1161px;top:464px;width:58px;height:19px;line-height:19px;color:#0808c8;">0,028</div>
<div class="n" style="left:1224px;top:464px;width:101px;height:19px;line-height:19px;color:#000;">198,806</div>
<div style="position:absolute;left:288px;top:482px;width:1050px;height:1px;background:#c3d3ea;"></div>
<div class="n" style="left:288px;top:484px;width:101px;height:19px;line-height:19px;color:#000;">1.952,632</div>
<div class="n" style="left:394px;top:484px;width:60px;height:19px;line-height:19px;color:#000;">390,526</div>
<div class="n" style="left:459px;top:484px;width:58px;height:19px;line-height:19px;color:#0808c8;">17,209</div>
<div class="n" style="left:522px;top:484px;width:101px;height:19px;line-height:19px;color:#000;">315,496</div>
<div class="n" style="left:628px;top:484px;width:60px;height:19px;line-height:19px;color:#000;">63,099</div>
<div class="n" style="left:693px;top:484px;width:58px;height:19px;line-height:19px;color:#0808c8;">2,781</div>
<div class="n" style="left:756px;top:484px;width:101px;height:19px;line-height:19px;color:#000;">3.313,780</div>
<div class="n" style="left:862px;top:484px;width:60px;height:19px;line-height:19px;color:#000;">662,756</div>
<div class="n" style="left:927px;top:484px;width:58px;height:19px;line-height:19px;color:#0808c8;">29,205</div>
<div class="n" style="left:990px;top:484px;width:101px;height:19px;line-height:19px;color:#000;">0,947</div>
<div class="n" style="left:1096px;top:484px;width:60px;height:19px;line-height:19px;color:#000;">0,189</div>
<div class="n" style="left:1161px;top:484px;width:58px;height:19px;line-height:19px;color:#0808c8;">0,008</div>
<div class="n" style="left:1224px;top:484px;width:101px;height:19px;line-height:19px;color:#000;">8,747</div>
<div style="position:absolute;left:288px;top:502px;width:1050px;height:1px;background:#c3d3ea;"></div>
<div style="position:absolute;left:393px;top:283px;width:1px;height:214px;background:#c3d3ea;"></div>
<div style="position:absolute;left:458px;top:283px;width:1px;height:214px;background:#c3d3ea;"></div>
<div style="position:absolute;left:521px;top:283px;width:1px;height:214px;background:#c3d3ea;"></div>
<div style="position:absolute;left:627px;top:283px;width:1px;height:214px;background:#c3d3ea;"></div>
<div style="position:absolute;left:692px;top:283px;width:1px;height:214px;background:#c3d3ea;"></div>
<div style="position:absolute;left:755px;top:283px;width:1px;height:214px;background:#c3d3ea;"></div>
<div style="position:absolute;left:861px;top:283px;width:1px;height:214px;background:#c3d3ea;"></div>
<div style="position:absolute;left:926px;top:283px;width:1px;height:214px;background:#c3d3ea;"></div>
<div style="position:absolute;left:989px;top:283px;width:1px;height:214px;background:#c3d3ea;"></div>
<div style="position:absolute;left:1095px;top:283px;width:1px;height:214px;background:#c3d3ea;"></div>
<div style="position:absolute;left:1160px;top:283px;width:1px;height:214px;background:#c3d3ea;"></div>
<div style="position:absolute;left:1223px;top:283px;width:1px;height:214px;background:#c3d3ea;"></div>
<div style="position:absolute;left:1329px;top:283px;width:1px;height:214px;background:#c3d3ea;"></div>
<div style="position:absolute;left:288px;top:283px;width:105px;height:19px;box-sizing:border-box;border:1px dotted #000;"></div>
<div style="position:absolute;left:2px;top:282px;width:285px;height:215px;background:#ecf1f9;"></div>
<div style="position:absolute;left:2px;top:282px;width:285px;height:1px;background:#8ca6c8;"></div>
<div style="position:absolute;left:87px;top:282px;width:1px;height:215px;background:#8ca6c8;"></div>
<div style="position:absolute;left:187px;top:282px;width:1px;height:215px;background:#8ca6c8;"></div>
<svg style="position:absolute;left:8px;top:290px" width="8" height="6" viewBox="0 0 8 6"><path d="M1 1 L4 4.2 L7 1" fill="none" stroke="#3b4a63" stroke-width="1.8"/></svg>
<div class="t" style="left:21px;top:283px;height:19px;line-height:19px;letter-spacing:-0.35px;">KS AGROP...</div>
<svg style="position:absolute;left:93px;top:290px" width="8" height="6" viewBox="0 0 8 6"><path d="M1 1 L4 4.2 L7 1" fill="none" stroke="#3b4a63" stroke-width="1.8"/></svg>
<div class="t" style="left:107px;top:283px;height:19px;line-height:19px;">SOJA 2024/2...</div>
<div style="position:absolute;left:188px;top:283px;width:99px;height:19px;background:linear-gradient(#eff4fa,#dde7f3);"></div>
<div style="position:absolute;left:188px;top:302px;width:99px;height:1px;background:#8ca6c8;"></div>
<div class="t" style="left:191px;top:283px;height:19px;line-height:19px;">PIVO 01 Área OP...</div>
<div style="position:absolute;left:188px;top:303px;width:99px;height:19px;background:linear-gradient(#eff4fa,#dde7f3);"></div>
<div style="position:absolute;left:188px;top:322px;width:99px;height:1px;background:#8ca6c8;"></div>
<div class="t" style="left:191px;top:303px;height:19px;line-height:19px;">PIVO 02 Área OP...</div>
<div style="position:absolute;left:188px;top:323px;width:99px;height:19px;background:linear-gradient(#eff4fa,#dde7f3);"></div>
<div style="position:absolute;left:188px;top:342px;width:99px;height:1px;background:#8ca6c8;"></div>
<div class="t" style="left:191px;top:323px;height:19px;line-height:19px;">PIVO 03 Área OP...</div>
<div style="position:absolute;left:188px;top:343px;width:99px;height:19px;background:linear-gradient(#eff4fa,#dde7f3);"></div>
<div style="position:absolute;left:188px;top:362px;width:99px;height:1px;background:#8ca6c8;"></div>
<div class="t" style="left:191px;top:343px;height:19px;line-height:19px;">PIVO 04 Área OP...</div>
<div style="position:absolute;left:188px;top:363px;width:99px;height:19px;background:linear-gradient(#eff4fa,#dde7f3);"></div>
<div style="position:absolute;left:188px;top:382px;width:99px;height:1px;background:#8ca6c8;"></div>
<div class="t" style="left:191px;top:363px;height:19px;line-height:19px;">PIVO 05 Área OP...</div>
<div style="position:absolute;left:188px;top:383px;width:99px;height:19px;background:linear-gradient(#eff4fa,#dde7f3);"></div>
<div style="position:absolute;left:188px;top:402px;width:99px;height:1px;background:#8ca6c8;"></div>
<div class="t" style="left:191px;top:383px;height:19px;line-height:19px;">PIVO 06 Área OP...</div>
<div style="position:absolute;left:188px;top:403px;width:99px;height:19px;background:linear-gradient(#eff4fa,#dde7f3);"></div>
<div style="position:absolute;left:188px;top:422px;width:99px;height:1px;background:#8ca6c8;"></div>
<div class="t" style="left:191px;top:403px;height:19px;line-height:19px;">PIVO 07 Área OP...</div>
<div style="position:absolute;left:188px;top:423px;width:99px;height:19px;background:linear-gradient(#eff4fa,#dde7f3);"></div>
<div style="position:absolute;left:188px;top:442px;width:99px;height:1px;background:#8ca6c8;"></div>
<div class="t" style="left:191px;top:423px;height:19px;line-height:19px;">TH 09 Área OP: ...</div>
<div style="position:absolute;left:188px;top:443px;width:99px;height:19px;background:linear-gradient(#eff4fa,#dde7f3);"></div>
<div style="position:absolute;left:188px;top:462px;width:99px;height:1px;background:#8ca6c8;"></div>
<div class="t" style="left:191px;top:443px;height:19px;line-height:19px;">TH 10 Área OP: ...</div>
<div style="position:absolute;left:188px;top:463px;width:99px;height:19px;background:linear-gradient(#eff4fa,#dde7f3);"></div>
<div style="position:absolute;left:188px;top:482px;width:99px;height:1px;background:#8ca6c8;"></div>
<div class="t" style="left:191px;top:463px;height:19px;line-height:19px;">TH 11 Área OP: ...</div>
<div style="position:absolute;left:188px;top:483px;width:99px;height:19px;background:linear-gradient(#eff4fa,#dde7f3);"></div>
<div style="position:absolute;left:188px;top:502px;width:99px;height:1px;background:#8ca6c8;"></div>
<div class="t" style="left:191px;top:483px;height:19px;line-height:19px;">TH 12 Área OP: ...</div>
<div style="position:absolute;left:2px;top:497px;width:285px;height:16px;background:#c1d1e6;"></div>
<div style="position:absolute;left:2px;top:496px;width:285px;height:1px;background:#8ca6c8;"></div>
<div style="position:absolute;left:1338px;top:283px;width:1px;height:214px;background:#c3d3ea;"></div>
<div style="position:absolute;left:1339px;top:283px;width:15px;height:214px;background:linear-gradient(90deg,#ccdaec,#dde7f3);"></div>
<svg style="position:absolute;left:1341px;top:288px" width="10" height="6" viewBox="0 0 10 6"><path d="M0 5 L9 5 L4.5 0 Z" fill="#4c5d7f"/></svg>
<svg style="position:absolute;left:1341px;top:486px" width="10" height="6" viewBox="0 0 10 6"><path d="M0 0 L9 0 L4.5 5 Z" fill="#4c5d7f"/></svg>
<div style="position:absolute;left:1339px;top:300px;width:14px;height:85px;box-sizing:border-box;border:1px solid #8fa9cb;border-radius:3px;background:linear-gradient(90deg,#e9f0f9,#d3dfef);"></div>
<div style="position:absolute;left:1342px;top:338px;width:8px;height:1px;background:#8a9bb5;"></div>
<div style="position:absolute;left:1342px;top:340px;width:8px;height:1px;background:#8a9bb5;"></div>
<div style="position:absolute;left:1342px;top:342px;width:8px;height:1px;background:#8a9bb5;"></div>
<div style="position:absolute;left:1342px;top:344px;width:8px;height:1px;background:#8a9bb5;"></div>
<div style="position:absolute;left:287px;top:497px;width:1px;height:16px;background:#8ca6c8;"></div>
<div style="position:absolute;left:288px;top:497px;width:1066px;height:16px;background:linear-gradient(#ccdaec,#dde7f3);"></div>
<svg style="position:absolute;left:293px;top:500px" width="6" height="10" viewBox="0 0 6 10"><path d="M5.5 0 L5.5 9.5 L0.3 4.75 Z" fill="#3d4a6e"/></svg>
<svg style="position:absolute;left:1327px;top:500px" width="6" height="10" viewBox="0 0 6 10"><path d="M0.3 0 L0.3 9.5 L5.5 4.75 Z" fill="#3d4a6e"/></svg>
<div style="position:absolute;left:304px;top:498px;width:441px;height:14px;box-sizing:border-box;border:1px solid #8fa9cb;border-radius:3px;background:linear-gradient(#e9f0f9,#d3dfef);"></div>
<div style="position:absolute;left:522px;top:501px;width:1px;height:8px;background:#8a9bb5;"></div>
<div style="position:absolute;left:524px;top:501px;width:1px;height:8px;background:#8a9bb5;"></div>
<div style="position:absolute;left:526px;top:501px;width:1px;height:8px;background:#8a9bb5;"></div>
<div style="position:absolute;left:528px;top:501px;width:1px;height:8px;background:#8a9bb5;"></div>
<div style="position:absolute;left:1338px;top:497px;width:16px;height:16px;background:#d0ddee;"></div>
<div style="position:absolute;left:2px;top:513px;width:1352px;height:25px;background:#d0ddee;"></div>
<div style="position:absolute;left:2px;top:513px;width:1352px;height:1px;background:#8ca6c8;"></div>
<div style="position:absolute;left:5px;top:517px;width:17px;height:19px;box-sizing:border-box;border:1px solid #8fa7c8;background:linear-gradient(#e6eef8,#d3dff0);"></div>
<svg style="position:absolute;left:9px;top:523px" width="9" height="7" viewBox="0 0 9 7"><path d="M1 0.8 L8 6.2 M8 0.8 L1 6.2" stroke="#4a5570" stroke-width="1.6"/></svg>
<div style="position:absolute;left:26px;top:520px;width:12px;height:12px;box-sizing:border-box;border:1px solid #a8b8cc;background:linear-gradient(#dfe5ec,#f5f7fa);"></div>
<svg style="position:absolute;left:27px;top:521px" width="10" height="10" viewBox="0 0 10 10"><path d="M2 5 L4.2 7.5 L8.5 1.5" fill="none" stroke="#3a5a92" stroke-width="1.6"/></svg>
<div class="t" style="left:42px;top:514px;height:25px;line-height:25px;letter-spacing:-0.125px;">Não [Talhão] Em ('BICO TH 01 Área OP: 13.1', 'CAL. TH 01 Área OP: 134.2', 'CAL. TH 02 e 03 Área OP: 187.1', 'CAL. TH 04 Área OP: 128.9', 'CAL. TH 05 Área OP: 195.0')</div>
<div style="position:absolute;left:1290px;top:517px;width:61px;height:19px;box-sizing:border-box;border:1px solid #9fb3cf;background:linear-gradient(#e3ebf6,#d3dfef);"></div>
<div class="t" style="left:1290px;top:517px;width:61px;height:19px;line-height:19px;text-align:center;color:#50607a;">Editar Filtro</div>
<div style="position:absolute;left:2px;top:538px;width:1352px;height:2px;background:#7f9cc1;"></div>
<div style="position:absolute;left:5px;top:543px;width:52px;height:21px;box-sizing:border-box;border:1px solid #8ea7c8;background:linear-gradient(#f0f5fb,#dde7f3);"></div>
<div class="t" style="left:11px;top:544px;height:21px;line-height:21px;">R$ /...</div>
<div style="position:absolute;left:60px;top:543px;width:52px;height:21px;box-sizing:border-box;border:1px solid #8ea7c8;background:linear-gradient(#f0f5fb,#dde7f3);"></div>
<div class="t" style="left:65px;top:544px;height:21px;line-height:21px;">Dola...</div>
<div style="position:absolute;left:115px;top:543px;width:52px;height:21px;box-sizing:border-box;border:1px solid #8ea7c8;background:linear-gradient(#f0f5fb,#dde7f3);"></div>
<div class="t" style="left:120px;top:544px;height:21px;line-height:21px;color:#0000f8;">SC /...</div>
<div style="position:absolute;left:172px;top:543px;width:65px;height:21px;box-sizing:border-box;border:1px solid #8ea7c8;background:linear-gradient(#f0f5fb,#dde7f3);"></div>
<div class="t" style="left:177px;top:544px;height:21px;line-height:21px;">Grupo</div>
<svg style="position:absolute;left:211px;top:551px" width="8" height="5" viewBox="0 0 8 5"><path d="M0 4.5 L8 4.5 L4 0.3 Z" fill="#000"/></svg>
<div style="position:absolute;left:240px;top:543px;width:86px;height:21px;box-sizing:border-box;border:1px solid #8ea7c8;background:linear-gradient(#f0f5fb,#dde7f3);"></div>
<div class="t" style="left:245px;top:544px;height:21px;line-height:21px;">Sub Grupo</div>
<svg style="position:absolute;left:300px;top:551px" width="8" height="5" viewBox="0 0 8 5"><path d="M0 4.5 L8 4.5 L4 0.3 Z" fill="#000"/></svg>
<div style="position:absolute;left:5px;top:603px;width:164px;height:21px;box-sizing:border-box;border:1px solid #8ea7c8;background:linear-gradient(#f0f5fb,#dde7f3);"></div>
<div class="t" style="left:10px;top:604px;height:21px;line-height:21px;">Descrição</div>
<svg style="position:absolute;left:144px;top:611px" width="8" height="5" viewBox="0 0 8 5"><path d="M0 4.5 L8 4.5 L4 0.3 Z" fill="#000"/></svg>
<div style="position:absolute;left:171px;top:566px;width:1183px;height:1px;background:#8ca6c8;"></div>
<div style="position:absolute;left:171px;top:566px;width:1px;height:147px;background:#8ca6c8;"></div>
<div style="position:absolute;left:172px;top:567px;width:1182px;height:20px;box-sizing:border-box;border-right:1px solid #8ca6c8;border-bottom:1px solid #8ca6c8;background:linear-gradient(#eff4fb,#e0e9f5);"></div>
<div class="t" style="left:192px;top:566px;height:20px;line-height:20px;">1-Custos Diretos</div>
<svg style="position:absolute;left:178px;top:574px" width="8" height="6" viewBox="0 0 8 6"><path d="M1 1 L4 4.2 L7 1" fill="none" stroke="#3b4a63" stroke-width="1.8"/></svg>
<div style="position:absolute;left:172px;top:587px;width:321px;height:20px;box-sizing:border-box;border-right:1px solid #8ca6c8;border-bottom:1px solid #8ca6c8;background:linear-gradient(#eff4fb,#e0e9f5);"></div>
<div class="t" style="left:176px;top:586px;height:20px;line-height:20px;">1-Fertilizantes</div>
<div style="position:absolute;left:493px;top:587px;width:321px;height:20px;box-sizing:border-box;border-right:1px solid #8ca6c8;border-bottom:1px solid #8ca6c8;background:linear-gradient(#eff4fb,#e0e9f5);"></div>
<div class="t" style="left:497px;top:586px;height:20px;line-height:20px;">2-Sementes</div>
<div style="position:absolute;left:814px;top:587px;width:321px;height:20px;box-sizing:border-box;border-right:1px solid #8ca6c8;border-bottom:1px solid #8ca6c8;background:linear-gradient(#eff4fb,#e0e9f5);"></div>
<div class="t" style="left:818px;top:586px;height:20px;line-height:20px;">3-Defensivos</div>
<div style="position:absolute;left:1135px;top:587px;width:219px;height:20px;box-sizing:border-box;border-right:1px solid #8ca6c8;border-bottom:1px solid #8ca6c8;background:linear-gradient(#eff4fb,#e0e9f5);"></div>
<div class="t" style="left:1139px;top:586px;height:20px;line-height:20px;">3-Inoculantes</div>
<div style="position:absolute;left:172px;top:607px;width:107px;height:20px;box-sizing:border-box;border-right:1px solid #8ca6c8;border-bottom:1px solid #8ca6c8;background:linear-gradient(#eff4fb,#e0e9f5);"></div>
<div class="t" style="left:172px;width:102px;top:606px;height:20px;line-height:20px;text-align:right;">R$ / Ha</div>
<div style="position:absolute;left:279px;top:607px;width:107px;height:20px;box-sizing:border-box;border-right:1px solid #8ca6c8;border-bottom:1px solid #8ca6c8;background:linear-gradient(#eff4fb,#e0e9f5);"></div>
<div class="t" style="left:279px;width:102px;top:606px;height:20px;line-height:20px;text-align:right;">Dolar /Ha</div>
<div style="position:absolute;left:386px;top:607px;width:107px;height:20px;box-sizing:border-box;border-right:1px solid #8ca6c8;border-bottom:1px solid #8ca6c8;background:linear-gradient(#eff4fb,#e0e9f5);"></div>
<div class="t" style="left:386px;width:102px;top:606px;height:20px;line-height:20px;text-align:right;color:#0000f8;">SC /Ha</div>
<div style="position:absolute;left:493px;top:607px;width:107px;height:20px;box-sizing:border-box;border-right:1px solid #8ca6c8;border-bottom:1px solid #8ca6c8;background:linear-gradient(#eff4fb,#e0e9f5);"></div>
<div class="t" style="left:493px;width:102px;top:606px;height:20px;line-height:20px;text-align:right;">R$ / Ha</div>
<div style="position:absolute;left:600px;top:607px;width:107px;height:20px;box-sizing:border-box;border-right:1px solid #8ca6c8;border-bottom:1px solid #8ca6c8;background:linear-gradient(#eff4fb,#e0e9f5);"></div>
<div class="t" style="left:600px;width:102px;top:606px;height:20px;line-height:20px;text-align:right;">Dolar /Ha</div>
<div style="position:absolute;left:707px;top:607px;width:107px;height:20px;box-sizing:border-box;border-right:1px solid #8ca6c8;border-bottom:1px solid #8ca6c8;background:linear-gradient(#eff4fb,#e0e9f5);"></div>
<div class="t" style="left:707px;width:102px;top:606px;height:20px;line-height:20px;text-align:right;color:#0000f8;">SC /Ha</div>
<div style="position:absolute;left:814px;top:607px;width:107px;height:20px;box-sizing:border-box;border-right:1px solid #8ca6c8;border-bottom:1px solid #8ca6c8;background:linear-gradient(#eff4fb,#e0e9f5);"></div>
<div class="t" style="left:814px;width:102px;top:606px;height:20px;line-height:20px;text-align:right;">R$ / Ha</div>
<div style="position:absolute;left:921px;top:607px;width:107px;height:20px;box-sizing:border-box;border-right:1px solid #8ca6c8;border-bottom:1px solid #8ca6c8;background:linear-gradient(#eff4fb,#e0e9f5);"></div>
<div class="t" style="left:921px;width:102px;top:606px;height:20px;line-height:20px;text-align:right;">Dolar /Ha</div>
<div style="position:absolute;left:1028px;top:607px;width:107px;height:20px;box-sizing:border-box;border-right:1px solid #8ca6c8;border-bottom:1px solid #8ca6c8;background:linear-gradient(#eff4fb,#e0e9f5);"></div>
<div class="t" style="left:1028px;width:102px;top:606px;height:20px;line-height:20px;text-align:right;color:#0000f8;">SC /Ha</div>
<div style="position:absolute;left:1135px;top:607px;width:107px;height:20px;box-sizing:border-box;border-right:1px solid #8ca6c8;border-bottom:1px solid #8ca6c8;background:linear-gradient(#eff4fb,#e0e9f5);"></div>
<div class="t" style="left:1135px;width:102px;top:606px;height:20px;line-height:20px;text-align:right;">R$ / Ha</div>
<div style="position:absolute;left:1242px;top:607px;width:107px;height:20px;box-sizing:border-box;border-right:1px solid #8ca6c8;border-bottom:1px solid #8ca6c8;background:linear-gradient(#eff4fb,#e0e9f5);"></div>
<div class="t" style="left:1242px;width:102px;top:606px;height:20px;line-height:20px;text-align:right;">Dolar /Ha</div>
<div style="position:absolute;left:1349px;top:607px;width:5px;height:20px;box-sizing:border-box;border-right:1px solid #8ca6c8;border-bottom:1px solid #8ca6c8;background:linear-gradient(#eff4fb,#e0e9f5);"></div>
<div style="position:absolute;left:172px;top:626px;width:1182px;height:72px;background:#fff;"></div>
<div class="n" style="left:172px;top:628px;width:102px;height:19px;line-height:19px;color:#000;">1.805,215</div>
<div class="n" style="left:279px;top:628px;width:102px;height:19px;line-height:19px;color:#000;">361,043</div>
<div class="n" style="left:386px;top:628px;width:102px;height:19px;line-height:19px;color:#0000f8;">15,910</div>
<div class="n" style="left:493px;top:628px;width:102px;height:19px;line-height:19px;color:#000;">360,388</div>
<div class="n" style="left:600px;top:628px;width:102px;height:19px;line-height:19px;color:#000;">72,078</div>
<div class="n" style="left:707px;top:628px;width:102px;height:19px;line-height:19px;color:#0000f8;">3,176</div>
<div class="n" style="left:814px;top:628px;width:102px;height:19px;line-height:19px;color:#000;">2.958,912</div>
<div class="n" style="left:921px;top:628px;width:102px;height:19px;line-height:19px;color:#000;">591,783</div>
<div class="n" style="left:1028px;top:628px;width:102px;height:19px;line-height:19px;color:#0000f8;">26,077</div>
<div class="n" style="left:1135px;top:628px;width:102px;height:19px;line-height:19px;color:#000;">1,489</div>
<div class="n" style="left:1242px;top:628px;width:102px;height:19px;line-height:19px;color:#000;">0,298</div>
<div style="position:absolute;left:172px;top:646px;width:1182px;height:1px;background:#c3d3ea;"></div>
<div class="n" style="left:172px;top:648px;width:102px;height:19px;line-height:19px;color:#000;">1.805,215</div>
<div class="n" style="left:279px;top:648px;width:102px;height:19px;line-height:19px;color:#000;">361,043</div>
<div class="n" style="left:386px;top:648px;width:102px;height:19px;line-height:19px;color:#0000f8;">15,910</div>
<div class="n" style="left:493px;top:648px;width:102px;height:19px;line-height:19px;color:#000;">360,388</div>
<div class="n" style="left:600px;top:648px;width:102px;height:19px;line-height:19px;color:#000;">72,078</div>
<div class="n" style="left:707px;top:648px;width:102px;height:19px;line-height:19px;color:#0000f8;">3,176</div>
<div class="n" style="left:814px;top:648px;width:102px;height:19px;line-height:19px;color:#000;">2.958,912</div>
<div class="n" style="left:921px;top:648px;width:102px;height:19px;line-height:19px;color:#000;">591,783</div>
<div class="n" style="left:1028px;top:648px;width:102px;height:19px;line-height:19px;color:#0000f8;">26,077</div>
<div class="n" style="left:1135px;top:648px;width:102px;height:19px;line-height:19px;color:#000;">1,489</div>
<div class="n" style="left:1242px;top:648px;width:102px;height:19px;line-height:19px;color:#000;">0,298</div>
<div style="position:absolute;left:172px;top:666px;width:1182px;height:1px;background:#c3d3ea;"></div>
<div style="position:absolute;left:278px;top:627px;width:1px;height:39px;background:#c3d3ea;"></div>
<div style="position:absolute;left:385px;top:627px;width:1px;height:39px;background:#c3d3ea;"></div>
<div style="position:absolute;left:492px;top:627px;width:1px;height:39px;background:#c3d3ea;"></div>
<div style="position:absolute;left:599px;top:627px;width:1px;height:39px;background:#c3d3ea;"></div>
<div style="position:absolute;left:706px;top:627px;width:1px;height:39px;background:#c3d3ea;"></div>
<div style="position:absolute;left:813px;top:627px;width:1px;height:39px;background:#c3d3ea;"></div>
<div style="position:absolute;left:920px;top:627px;width:1px;height:39px;background:#c3d3ea;"></div>
<div style="position:absolute;left:1027px;top:627px;width:1px;height:39px;background:#c3d3ea;"></div>
<div style="position:absolute;left:1134px;top:627px;width:1px;height:39px;background:#c3d3ea;"></div>
<div style="position:absolute;left:1241px;top:627px;width:1px;height:39px;background:#c3d3ea;"></div>
<div style="position:absolute;left:1348px;top:627px;width:1px;height:39px;background:#c3d3ea;"></div>
<div style="position:absolute;left:172px;top:626px;width:1182px;height:1px;background:#8fa7c8;"></div>
<div style="position:absolute;left:2px;top:626px;width:170px;height:1px;background:#8ca6c8;"></div>
<div style="position:absolute;left:2px;top:627px;width:169px;height:19px;background:linear-gradient(#eff4fa,#dbe5f2);"></div>
<div style="position:absolute;left:2px;top:646px;width:169px;height:1px;background:#8ca6c8;"></div>
<div class="t" style="left:5px;top:627px;height:19px;line-height:19px;"><span style="letter-spacing:-0.45px">KS AGROPECURARIA Área ope...</span></div>
<div style="position:absolute;left:2px;top:647px;width:169px;height:19px;background:linear-gradient(#eff4fa,#dbe5f2);"></div>
<div style="position:absolute;left:2px;top:666px;width:169px;height:1px;background:#8ca6c8;"></div>
<div class="t" style="left:5px;top:647px;height:19px;line-height:19px;"><span style="letter-spacing:0px">SOJA 2024/2025 Área open = ...</span></div>
<div style="position:absolute;left:2px;top:667px;width:169px;height:47px;background:#c1d1e6;"></div>
<div style="position:absolute;left:172px;top:698px;width:1182px;height:16px;background:linear-gradient(#ccdaec,#dde7f3);"></div>
<svg style="position:absolute;left:177px;top:701px" width="6" height="10" viewBox="0 0 6 10"><path d="M5.5 0 L5.5 9.5 L0.3 4.75 Z" fill="#3d4a6e"/></svg>
<svg style="position:absolute;left:1343px;top:701px" width="6" height="10" viewBox="0 0 6 10"><path d="M0.3 0 L0.3 9.5 L5.5 4.75 Z" fill="#3d4a6e"/></svg>
<div style="position:absolute;left:188px;top:699px;width:468px;height:14px;box-sizing:border-box;border:1px solid #9ab2d2;border-radius:3px;background:linear-gradient(#e9f0f9,#d3dfef);"></div>
<div style="position:absolute;left:418px;top:702px;width:1px;height:8px;background:#8a9bb5;"></div>
<div style="position:absolute;left:420px;top:702px;width:1px;height:8px;background:#8a9bb5;"></div>
<div style="position:absolute;left:422px;top:702px;width:1px;height:8px;background:#8a9bb5;"></div>
<div style="position:absolute;left:424px;top:702px;width:1px;height:8px;background:#8a9bb5;"></div>
<div style="position:absolute;left:171px;top:626px;width:1px;height:88px;background:#8ca6c8;"></div>
<svg style="position:absolute;left:1346px;top:706px" width="12" height="12" viewBox="0 0 12 12"><defs><clipPath id="gc"><rect x="10" y="0" width="2" height="12"/><rect x="0" y="10" width="12" height="2"/></clipPath></defs><g clip-path="url(#gc)" shape-rendering="crispEdges"><line x1="-7" y1="12" x2="12" y2="-7" stroke="#ffffff" stroke-width="1"/><line x1="-6" y1="12" x2="12" y2="-6" stroke="#7a7a7a" stroke-width="1"/><line x1="-5" y1="12" x2="12" y2="-5" stroke="#4a4a4a" stroke-width="1"/><line x1="-3" y1="12" x2="12" y2="-3" stroke="#ffffff" stroke-width="1"/><line x1="-2" y1="12" x2="12" y2="-2" stroke="#7a7a7a" stroke-width="1"/><line x1="-1" y1="12" x2="12" y2="-1" stroke="#4a4a4a" stroke-width="1"/><line x1="1" y1="12" x2="12" y2="1" stroke="#ffffff" stroke-width="1"/><line x1="2" y1="12" x2="12" y2="2" stroke="#7a7a7a" stroke-width="1"/><line x1="3" y1="12" x2="12" y2="3" stroke="#4a4a4a" stroke-width="1"/><line x1="5" y1="12" x2="12" y2="5" stroke="#ffffff" stroke-width="1"/><line x1="6" y1="12" x2="12" y2="6" stroke="#7a7a7a" stroke-width="1"/><line x1="7" y1="12" x2="12" y2="7" stroke="#4a4a4a" stroke-width="1"/><line x1="9" y1="12" x2="12" y2="9" stroke="#ffffff" stroke-width="1"/><line x1="10" y1="12" x2="12" y2="10" stroke="#7a7a7a" stroke-width="1"/><line x1="11" y1="12" x2="12" y2="11" stroke="#4a4a4a" stroke-width="1"/></g></svg>
</body></html>
